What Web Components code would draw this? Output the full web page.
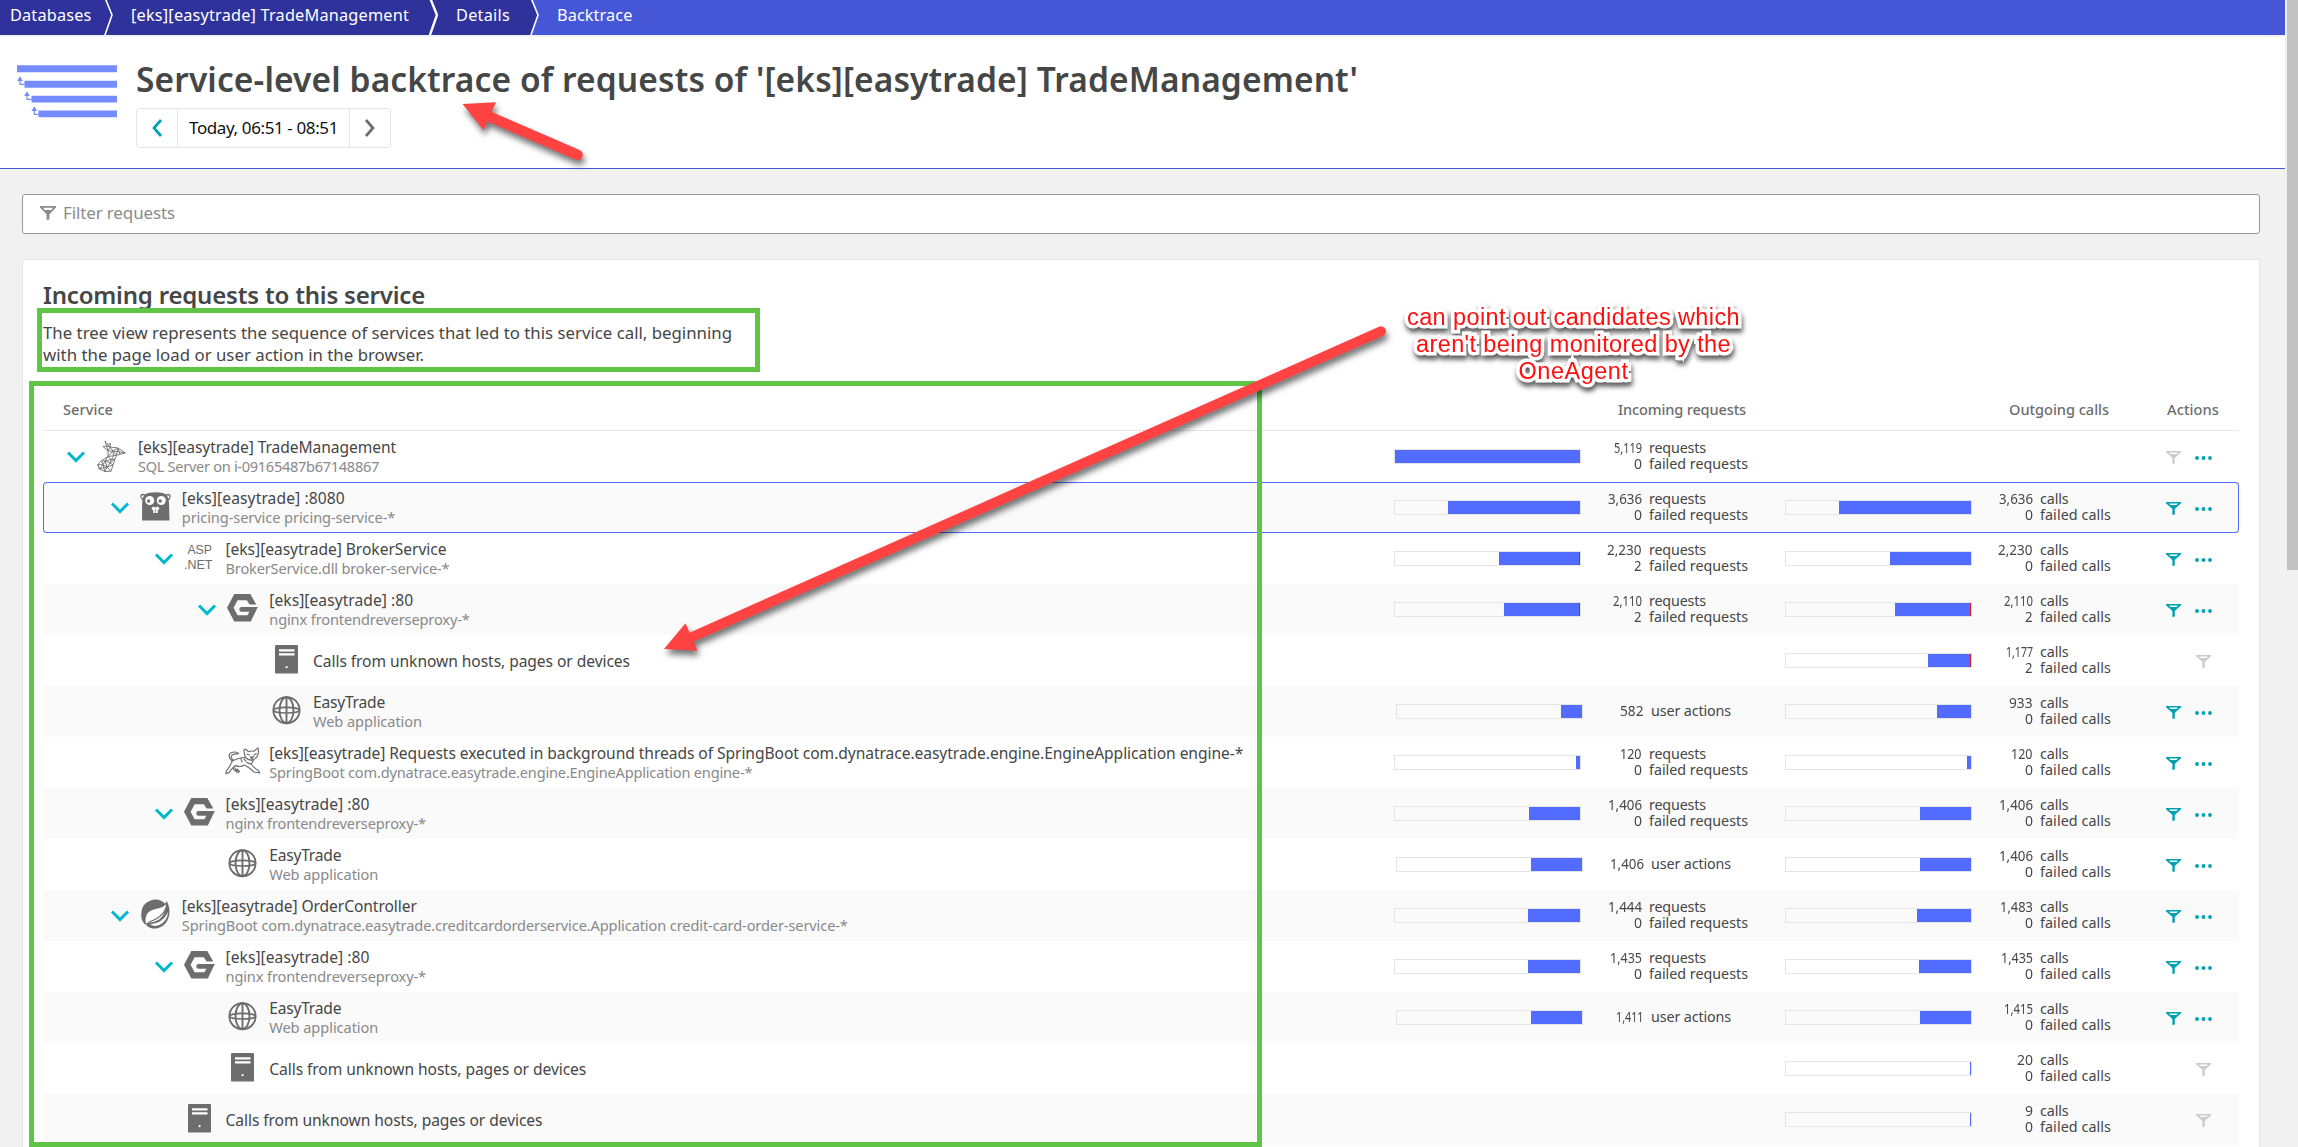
<!DOCTYPE html>
<html lang="en">
<head>
<meta charset="utf-8">
<title>Service-level backtrace</title>
<style>
html,body{margin:0;padding:0;height:1147px;overflow:hidden;background:#f1f1f1}
body{font-family:"Noto Sans","Open Sans",sans-serif;color:#454646;position:relative}
</style>
</head>
<body>
<back-trace-app></back-trace-app>
<script>
const define = (name, css, html, setup) => {
  customElements.define(name, class extends HTMLElement {
    connectedCallback() {
      if (this.shadowRoot) return;
      const root = this.attachShadow({mode: 'open'});
      root.innerHTML = `<style>*{box-sizing:border-box}${css}</style>${typeof html === 'function' ? html(this) : html}`;
      if (setup) setup(this, root);
    }
  });
};

/* Text that fills a given width, by letter spacing or, with "squeeze", by narrower glyphs. */
define('fit-text', ':host{display:inline-block;white-space:pre}span{display:inline-block;transform-origin:0 50%}:host(.sub){}', '<span><slot></slot></span>', (el, root) => {
  const w = parseFloat(el.getAttribute('w'));
  if (!w) return;
  const s = root.querySelector('span');
  const natural = s.getBoundingClientRect().width;
  if (el.hasAttribute('squeeze')) {
    el.style.width = w + 'px';
    s.style.transform = `scaleX(${w / natural})`;
  } else {
    s.style.letterSpacing = ((w - natural) / el.textContent.length) + 'px';
  }
});

const ICONS = {
  nginx: ['0 0 31 28', '<path fill="#6d6d6d" d="M7.3 0H23.3L29.3 10.4H22.6L19.8 6.2H10.6L6.6 13.8L10.6 21.3H20.4L22.4 17.8H14.6a2.3 2.3 0 0 1 0-4.7H30.8L23.8 27.6H7.3L0 13.8Z"/>'],
  server: ['0 0 23 29', '<rect width="23" height="28.6" rx="1.2" fill="#6d6d6d"/><path fill="#fff" d="M4 4.2h15.5v2.2H4zM4 8.2h15.5v2.2H4z"/><circle cx="11.6" cy="22.2" r="1.1" fill="#fff"/>'],
  globe: ['0 0 29 29', '<g fill="none" stroke="#6d6d6d" stroke-width="1.9"><circle cx="14.5" cy="14.2" r="13.1"/><ellipse cx="14.5" cy="14.2" rx="7" ry="13"/><path d="M14.5 1v26.4"/><ellipse cx="14.5" cy="14.2" rx="13" ry="2.8" stroke-width="1.6"/></g>'],
  gopher: ['0 0 31 29', '<path fill="#6d6d6d" d="M1 6.5C-1 3.5 1.5.6 5 2.4C9 -.4 22 -.4 26 2.4C29.5.6 32 3.5 30 6.8L28.8 8C29.3 15 29.2 22 29.5 28.6H2C2.3 22 1.8 14 2.4 8Z"/><path fill="#fff" d="M1.5 5.6C1.3 3.5 2.8 2.9 4 3.6L2.6 6.6zM29.5 5.6C29.7 3.5 28.2 2.9 27 3.6L28.4 6.6z"/><circle cx="9.7" cy="8.5" r="4.5" fill="#fff"/><circle cx="21.3" cy="8.5" r="4.5" fill="#fff"/><circle cx="8.6" cy="9" r="1.7" fill="#6d6d6d"/><circle cx="20.2" cy="9" r="1.7" fill="#6d6d6d"/><path fill="#fff" d="M12 15.5q3.5-3 7 0q1 2.5-1.2 2.4V21h-4.6v-3.1Q11 18 12 15.5"/><ellipse cx="15.5" cy="14.3" rx="1.9" ry="1.1" fill="#6d6d6d"/><path d="M15.5 17v4" stroke="#6d6d6d" stroke-width=".6"/>'],
  asp: ['0 0 30 28', '<g font-family="Liberation Sans,sans-serif" font-size="13.2" fill="#6d6d6d"><text x="3.4" y="11.2" textLength="24.6" lengthAdjust="spacingAndGlyphs">ASP</text><text x="0" y="25.6" textLength="28.4" lengthAdjust="spacingAndGlyphs">.NET</text></g>'],
  spring: ['0 0 29 29', '<path fill="#6d6d6d" d="M25.8 1C29.5 8 29.5 16 25.5 22A13.8 13.8 0 0 1 4.3 24.8A13.8 13.8 0 0 1 .3 13.5A14 14 0 0 1 24 3.6C25 2.6 25.4 1.8 25.8 1Z"/><path fill="#fff" d="M25 4C21 10.5 9 7 5.5 15.2C4.2 18.5 4.2 21.5 5.2 23.2C15 22 24 20 25 4ZM4.6 24.2a1.1 1.1 0 1 0 .1 0"/><path fill="none" stroke="#6d6d6d" stroke-width="1.1" d="M7 22.6C15 20 22 16 25 8"/><path fill="#fff" d="M9 24.3C18 23.5 24 19 26.8 12C27 20 20 26 13 26Z"/>'],
  sql: ['0 0 29 31', '<g fill="none" stroke="#767676" stroke-width=".95" stroke-linejoin="round"><path d="M8 0L10.5 3.5L13.5 2.5L13 6L21 7L28.3 12L19.5 14.3L18 18L16 24L14 30.2L8 30.6L2.4 28L.8 23.5L4.5 19.8L11 15.5L11 10L6 5.5L9.5 5Z"/><path d="M9.5 5L13 6L10.5 3.5M9.5 5L11 10L13 6L16 10L21 7L19.5 14.3L16 10L11 10M28.3 12L16 10L11 15.5L19.5 14.3M11 15.5L14.5 18.5L18 18L13 22L16 24L10 26L14 30.2M14.5 18.5L8 20L4.5 19.8L6 24L.8 23.5L2.4 28L6 24L8 30.6L10 26L6 24L8 20L13 22L14.5 18.5M13 22L10 26L2.4 28M8 20L10 26M11 15.5L8 20M21 7L23 13.4M16 10L16.5 14.8L14.5 18.5"/></g>'],
  tomcat: ['0 0 36 27', '<g fill="none" stroke="#6d6d6d" stroke-width="1.15" stroke-linejoin="round" stroke-linecap="round"><path d="M19 3C20.5 1.4 20.5 2 23.5 4.6Q26.5 3.6 29 4.3L33 .9Q34 5 32.8 8Q32 11 28.5 12.6Q24 14.2 20.5 10.5Q19 7 19 3Z"/><path d="M22 7.2l2.6.8M29 8l2.3-1.2M25.4 10l1.6.6L28.8 9.4M26.7 10.6v1.2"/><path d="M19.8 10.2Q13 11 7.2 14Q5.5 19 1.4 24L.8 26.4L4.2 25.6Q8 20 10.5 18.6Q15 20.6 19.5 18Q25 21 29 25L34.8 26L33.4 23.6Q29.6 21.4 26 17Q28 15 28.5 12.6M7.2 14Q3 11 4.5 7Q8 3.4 13.6 6.2M8 12.8Q4.9 10 7 8.2Q10 6.4 13 7M10.5 18.6Q8 20 8.8 22.6L12.2 25.4L14.6 24.6L12 22M19 12l1.8 2M16 12l1 3M21.8 15.2q2.8 1.8 4.2 1.8"/></g><path fill="#6d6d6d" d="M24.6 9.8h4l-1.8 3.4zM9 20l4.6 4-2.6 1z"/>'],
  chevron: ['0 0 18 12', '<path fill="none" stroke="#00b9cc" stroke-width="2.9" d="M1 1.4L9 9.6L17 1.4"/>'],
  funnel: ['0 0 15 13', '<path fill="currentColor" fill-rule="evenodd" d="M0 0H15V1.2L8.8 7V12.4L6.4 13V7L0 1.2ZM3 1.6L4.6 3.1H10.4L12 1.6Z"/>'],
  filter: ['0 0 16 14', '<path fill="currentColor" fill-rule="evenodd" d="M0 0H16V1.6L9.4 8.2V13.6L6.6 14V8.2L0 1.6ZM3 1.8L4.8 4H11.2L13 1.8Z"/>'],
  dots: ['0 0 17 4', '<g fill="currentColor"><circle cx="2" cy="2" r="1.9"/><circle cx="8.5" cy="2" r="1.9"/><circle cx="15" cy="2" r="1.9"/></g>'],
  left: ['0 0 10 18', '<path fill="none" stroke="currentColor" stroke-width="2.7" d="M9 1L2 9L9 17"/>'],
  right: ['0 0 10 18', '<path fill="none" stroke="currentColor" stroke-width="2.7" d="M1 1L8 9L1 17"/>'],
  trace: ['0 0 100 54', '<g fill="#748cff"><path d="M0 .3h100v7H0zM7.5 15.7H100v7H7.5zM14.5 30.7H100v6.8H14.5zM21.5 45.5H100v6.8H21.5z"/><path d="M3 11.3L5.8 16H.2zM10 26.3L12.8 31H7.2zM17.3 41.3L20.1 46h-5.6z"/></g><path fill="none" stroke="#748cff" stroke-width="1.2" d="M3 15v4.3h4.5M10 30v4.3h4.5M17.3 45v4.3h4.5"/>']
};
define('ui-icon', ':host{display:block;flex:none}svg{display:block;overflow:visible}', el => {
  const [box, body] = ICONS[el.getAttribute('name')];
  const [, , w, h] = box.split(' ');
  return `<svg width="${w}" height="${h}" viewBox="${box}">${body}</svg>`;
});

define('crumb-bar', `
:host{display:flex;height:37px;width:2285px;background:#4556d7;border-bottom:2px solid #f2f3fa;color:#fff;font-size:16.3px;line-height:30px}
.c{height:35px;padding-left:26px;background:#30329b;position:relative}
.c.first{padding-left:10px}
.c.last{background:none}
svg{position:absolute;right:-8px;top:0;z-index:1;display:block}`,
() => {
  const items = [['Databases', 81.5, 105, 1.6], ['[eks][easytrade] TradeManagement', 278, 325, 2.4], ['Details', 54, 101, 1.6]];
  return items.map(([t, w, box, s], i) => `<div class="c${i ? '' : ' first'}" style="width:${box}px"><fit-text w="${w}">${t}</fit-text>
   <svg width="9" height="35"><path fill="#30329b" d="M0 0H2L8 15L1 35H0Z"/><path fill="none" stroke="#fff" stroke-width="${s}" d="M1.5 -1L8 15L.6 36"/></svg></div>`).join('') +
   '<div class="c last"><fit-text w="75.5">Backtrace</fit-text></div>';
});

define('page-head', `
:host{display:flex;width:2285px;height:132px;background:#fff;border-bottom:1px solid #4556d7;padding:27.5px 0 0 17px;gap:19px}
.t{padding-top:1px}
h1{margin:0;font-size:33.5px;font-weight:600;line-height:40px;margin-top:-7px}
.time{margin-top:9.5px;display:flex;width:255px;height:40px;border:1px solid #e4e4e4;border-radius:4px;font-size:17px;line-height:38px;color:#111}
.time>*{display:flex;align-items:center;justify-content:center}
.b{width:40px;color:#00a1b2}.m{flex:1;border:solid #e4e4e4;border-width:0 1px}.n{color:#6d6d6d}`,
`<ui-icon name="trace"></ui-icon><div class="t"><h1><fit-text w="1222">Service-level backtrace of requests of '[eks][easytrade] TradeManagement'</fit-text></h1>
<div class="time"><div class="b"><ui-icon name="left"></ui-icon></div><div class="m"><fit-text w="149">Today, 06:51 - 08:51</fit-text></div><div class="b n"><ui-icon name="right"></ui-icon></div></div></div>`);

define('filter-box', `
:host{display:flex;align-items:center;margin:25px 0 0 22px;width:2238px;height:40px;background:#fff;border:1px solid #999;border-radius:3px;padding:0 0 3px 17px;gap:7px;font-size:17px;color:#8b8b8b}`,
'<ui-icon name="filter"></ui-icon><fit-text w="112">Filter requests</fit-text>');

define('usage-bar', `
:host{display:flex;justify-content:flex-end;width:187px;height:15px;border:1px solid #e4e4e4;margin-top:18px;flex:none}
.f{background:#526cff;height:13px}.r{width:1px;background:#dc172a;height:13px}`,
el => `<div class="f" style="width:${el.getAttribute('v')}px"></div>${el.hasAttribute('failed') ? '<div class="r"></div>' : ''}`);

/* Name, sub line, level, icon, incoming and outgoing figures of each service. */
const R = 'requests', F = 'failed requests';
const ROWS = [
 {l:0,i:'sql',o:1,t:['[eks][easytrade] TradeManagement',258],s:['SQL Server on i-09165487b67148867',241],in:['5,119','0',185],a:'off'},
 {l:1,i:'gopher',o:1,sel:1,t:['[eks][easytrade] :8080',163],s:['pricing-service pricing-service-*',213.5],in:['3,636','0',132],out:['3,636','0',132],a:'on'},
 {l:2,i:'asp',o:1,t:['[eks][easytrade] BrokerService',221],s:['BrokerService.dll broker-service-*',224],in:['2,230','2',80,1],out:['2,230','0',81],a:'on'},
 {l:3,i:'nginx',o:1,t:['[eks][easytrade] :80',144],s:['nginx frontendreverseproxy-*',200.5],in:['2,110','2',75,1],out:['2,110','2',75,1],a:'on'},
 {l:4,i:'server',t:['Calls from unknown hosts, pages or devices',317],out:['1,177','2',42,1],a:'solo'},
 {l:4,i:'globe',t:['EasyTrade',72],s:['Web application',109],ua:['582',21],out:['933','0',34],a:'on'},
 {l:3,i:'tomcat',t:['[eks][easytrade] Requests executed in background threads of SpringBoot com.dynatrace.easytrade.engine.EngineApplication engine-*',974],s:['SpringBoot com.dynatrace.easytrade.engine.EngineApplication engine-*',483],in:['120','0',4],out:['120','0',4],a:'on'},
 {l:2,i:'nginx',o:1,t:['[eks][easytrade] :80',144],s:['nginx frontendreverseproxy-*',200.5],in:['1,406','0',51],out:['1,406','0',51],a:'on'},
 {l:3,i:'globe',t:['EasyTrade',72],s:['Web application',109],ua:['1,406',51],out:['1,406','0',51],a:'on'},
 {l:1,i:'spring',o:1,t:['[eks][easytrade] OrderController',235],s:['SpringBoot com.dynatrace.easytrade.creditcardorderservice.Application credit-card-order-service-*',666],in:['1,444','0',52],out:['1,483','0',54],a:'on'},
 {l:2,i:'nginx',o:1,t:['[eks][easytrade] :80',144],s:['nginx frontendreverseproxy-*',200.5],in:['1,435','0',52],out:['1,435','0',52],a:'on'},
 {l:3,i:'globe',t:['EasyTrade',72],s:['Web application',109],ua:['1,411',51],out:['1,415','0',51],a:'on'},
 {l:3,i:'server',t:['Calls from unknown hosts, pages or devices',317],out:['20','0',1],a:'solo'},
 {l:2,i:'server',t:['Calls from unknown hosts, pages or devices',317],out:['9','0',1],a:'solo'}
];
const NUMW = {'5,119':28,'3,636':34,'2,230':34.5,'2,110':29,'1,177':27,'582':23.5,'933':23.5,'120':21.5,'1,406':34,'1,444':34,'1,483':33,'1,435':32,'1,415':29,'1,411':27.5,'20':16,'9':8,'0':8,'2':7.5};
const figures = pairs => `<div class="nums">${pairs.map(([n]) => `<fit-text squeeze w="${NUMW[n]}">${n}</fit-text>`).join('')}</div><div class="labs">${pairs.map(([, l, w]) => `<fit-text w="${w}">${l}</fit-text>`).join('')}</div>`;

define('trace-row', `
:host{display:flex;height:51px;width:2196px}
:host([odd]){background:#fafafa}
:host([selected]){box-shadow:inset 0 0 0 1px #526cff;border-radius:4px}
.name{width:1351px;display:flex}
.chev{width:27px;padding-top:20px;height:51px}
.ico{width:35px;display:flex;justify-content:center;padding-top:10px;margin-right:9px}
.tx{display:flex;flex-direction:column;align-items:flex-start;padding-top:6.8px;font-size:15.6px;line-height:19px}
.tx.one{padding-top:17px}
.sub{font-size:14.6px;color:#898989}
.cell{width:391px;display:flex;font-size:14.3px;line-height:16px}
.cell.ua{padding-left:2px;width:391px}
.nums{width:60.5px;display:flex;flex-direction:column;align-items:flex-end;padding-top:9px}
.labs{display:flex;flex-direction:column;align-items:flex-start;padding:9px 0 0 7.5px}
.ua .nums,.ua .labs{padding-top:17px}
.act{display:flex;padding-top:20px;color:#00a1b2;margin-left:-10.5px;gap:14.5px}
.act ui-icon[name=dots]{padding-top:5px}
.act .off,.act.off{color:#ccc}
.solo{padding-left:30px}`,
el => {
  const d = ROWS[+el.getAttribute('index')];
  const inc = d.in ? `<div class="cell"><usage-bar v="${d.in[2]}"${d.in[3] ? ' failed' : ''}></usage-bar>${figures([[d.in[0], R, 57], [d.in[1], F, 99]])}</div>`
    : d.ua ? `<div class="cell ua"><usage-bar v="${d.ua[1]}"></usage-bar>${figures([[d.ua[0], 'user actions', 80]])}</div>` : '<div class="cell"></div>';
  const out = d.out ? `<div class="cell"><usage-bar v="${d.out[2]}"${d.out[3] ? ' failed' : ''}></usage-bar>${figures([[d.out[0], 'calls', 28.5], [d.out[1], 'failed calls', 71]])}</div>` : '<div class="cell"></div>';
  const act = d.a === 'solo' ? '<div class="act solo off"><ui-icon name="funnel"></ui-icon></div>'
    : `<div class="act"><ui-icon name="funnel" class="${d.a}"></ui-icon><ui-icon name="dots"></ui-icon></div>`;
  return `<div class="name" style="padding-left:${24 + d.l * 43.75}px"><div class="chev">${d.o ? '<ui-icon name="chevron"></ui-icon>' : ''}</div>
   <div class="ico"><ui-icon name="${d.i}"></ui-icon></div>
   <div class="tx${d.s ? '' : ' one'}"><fit-text w="${d.t[1]}">${d.t[0]}</fit-text>${d.s ? `<fit-text class="sub" w="${d.s[1]}">${d.s[0]}</fit-text>` : ''}</div></div>${inc}${out}${act}`;
});

define('trace-card', `
:host{display:block;margin:25px 0 0 22px;width:2238px;height:900px;background:#fff;border:1px solid #e6e6e6;padding:22px 0 0 20px}
h2{margin:0;font-size:24px;font-weight:600;line-height:26px}
p{margin:14px 0 0;font-size:16.8px;line-height:22px;height:77px}
p fit-text{display:block}
.head{display:flex;height:32px;border-bottom:1px solid #e6e6e6;width:2196px;font-size:14.6px;font-weight:500;color:#6d6d6d;line-height:20px}
.head span{display:block}`,
`<h2><fit-text w="382">Incoming requests to this service</fit-text></h2>
<p><fit-text w="689">The tree view represents the sequence of services that led to this service call, beginning</fit-text><fit-text w="381">with the page load or user action in the browser.</fit-text></p>
<div class="head"><span style="padding-left:20px;width:1575px"><fit-text w="50">Service</fit-text></span><span style="width:391px"><fit-text w="128">Incoming requests</fit-text></span><span style="width:158px"><fit-text w="100">Outgoing calls</fit-text></span><span><fit-text w="52">Actions</fit-text></span></div>
${ROWS.map((d, i) => `<trace-row index="${i}"${i % 2 ? ' odd' : ''}${d.sel ? ' selected' : ''}></trace-row>`).join('')}`);

define('page-scrollbar', ':host{position:absolute;left:2285px;top:0;width:13px;height:1147px;background:#f1f1f1}div{margin-left:2px;width:11px;height:570px;background:#c1c1c1}', '<div></div>');

/* Mark-up drawn over the page: frames, arrows and the note. */
define('markup-layer', `
:host{position:absolute;left:0;top:0;width:2298px;height:1147px;pointer-events:none;overflow:hidden}
.box{position:absolute;border:5px solid #60c547}
svg{position:absolute;left:0;top:0;filter:drop-shadow(2px 5px 3px rgba(0,0,0,.55))}
.note{position:absolute;left:1400px;top:303.5px;width:347px;text-align:center;font-family:"Liberation Sans",Arial,sans-serif;font-size:23.5px;line-height:27px;color:#ff0f0f;-webkit-text-stroke:7px #fff;paint-order:stroke fill;stroke-linejoin:round;filter:drop-shadow(1px 4px 2.5px rgba(0,0,0,.65))}
.note fit-text{display:block}`,
`<div class="box" style="left:37px;top:308px;width:723px;height:64px"></div>
<div class="box" style="left:29px;top:381px;width:1233px;height:766px"></div>
<svg width="2298" height="1147"><g fill="#ff4343" stroke="#ff4343"><path stroke="none" d="M462.5 104L496 102.3L483.5 130Z"/><path stroke-width="10.5" stroke-linecap="round" d="M489 116.5L577.5 154.8"/>
<path stroke="none" d="M664 649L685.5 623.3L697.5 650.7Z"/><path stroke-width="10" stroke-linecap="round" d="M692 637L1381 331.3"/></g></svg>
<div class="note"><fit-text w="333">can point out candidates which</fit-text><fit-text w="315">aren't being monitored by the</fit-text><fit-text w="110">OneAgent</fit-text></div>`);

define('back-trace-app', ':host{display:block;height:1147px;overflow:hidden;position:relative}',
'<crumb-bar></crumb-bar><page-head></page-head><filter-box></filter-box><trace-card></trace-card><page-scrollbar></page-scrollbar><markup-layer></markup-layer>');
</script>
</body>
</html>
